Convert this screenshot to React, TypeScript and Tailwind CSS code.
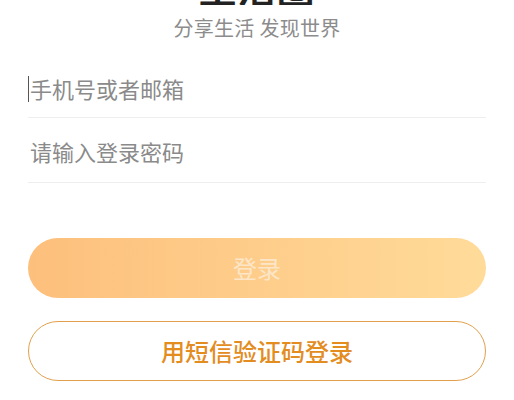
export default function App() {
  const font = "font-['Noto_Sans_CJK_SC','Noto_Sans',sans-serif]"

  return (
    <div className={`w-[514px] h-[400px] overflow-hidden bg-white ${font}`}>
      <div className="flex flex-col items-center">
        {/* title, scrolled mostly out of view */}
        <div className="h-[5px] overflow-hidden flex items-end justify-center">
          <h1 className="text-[38px] leading-[38px] mb-[-1px] font-bold text-[#222] tracking-[1px] shrink-0">
            生活圈
          </h1>
        </div>
        <p className="mt-[9px] text-[20px] leading-[28px] text-[#8c8c8c] tracking-[0.3px]">分享生活 发现世界</p>
      </div>

      <div className="mx-[28px] mt-[18px]">
        <div className="flex items-center h-[58px] border-b border-[#eeeeee]">
          <span className="w-px h-[26px] bg-[#555] mr-px" />
          <span className="text-[22px] text-[#8a8a8a]">手机号或者邮箱</span>
        </div>
        <div className="flex items-center h-[65px] pt-[2px] border-b border-[#eeeeee]">
          <span className="pl-[2px] text-[22px] text-[#8a8a8a]">请输入登录密码</span>
        </div>

        <button className="mt-[55px] w-full h-[60px] rounded-full bg-gradient-to-r from-[#fdbf7c] to-[#ffdb99] text-[24px] text-[#fde6c8]">
          登录
        </button>

        <button className="mt-[23px] w-full h-[60px] rounded-full border border-[#e2a04c] text-[24px] font-medium text-[#e38c1f]">
          用短信验证码登录
        </button>
      </div>
    </div>
  )
}
